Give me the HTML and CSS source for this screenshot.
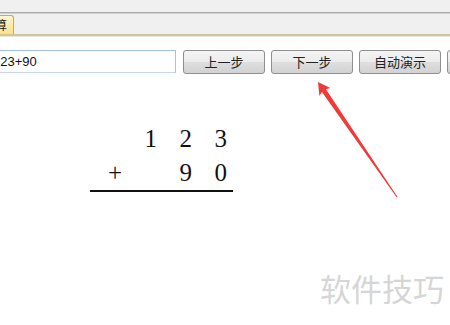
FILE: index.html
```html
<!DOCTYPE html>
<html>
<head>
<meta charset="utf-8">
<link rel="stylesheet" href="styles.css">
</head>
<body>
<div class="page">
  <div class="topbar"></div>
  <div class="sep"></div>
  <div class="tabstrip">
    <div class="tab">计算</div>
  </div>
  <div class="tabline"></div>
  <div class="toolbar">
    <input class="expr" type="text" value="123+90">
    <button class="btn">上一步</button>
    <button class="btn">下一步</button>
    <button class="btn">自动演示</button>
    <button class="btn">重新开始</button>
  </div>
  <div class="sum">
    <div class="row"><span></span><span>1</span><span>2</span><span>3</span></div>
    <div class="row"><span>+</span><span></span><span>9</span><span>0</span></div>
  </div>
  <div class="watermark">软件技巧</div>
  <svg class="arrow" width="450" height="325" viewBox="0 0 450 325">
    <polygon points="318,82 330.4,88 325.9,89.3 397.4,196.8 396.6,197.2 321.9,91.9 319.4,96" fill="#f03a3a"/>
  </svg>
</div>
</body>
</html>
```

FILE: styles.css
```css
html, body {
  margin: 0;
  padding: 0;
  background: #ffffff;
}
.page {
  position: relative;
  width: 450px;
  height: 325px;
  overflow: hidden;
}
.topbar {
  height: 12px;
  background: #f0f0f0;
}
.sep {
  height: 0;
  border-top: 1px solid #a8acae;
  border-bottom: 1px solid #cfd2d3;
}
.tabstrip {
  height: 20px;
  background: #f0f0f0;
  display: flex;
  align-items: flex-end;
}
.tab {
  margin-left: -20px;
  width: 26px;
  height: 18px;
  padding-right: 6px;
  box-sizing: content-box;
  border: 1px solid #b9ab7c;
  border-bottom: none;
  border-radius: 0 3px 0 0;
  background: linear-gradient(#fff6cc, #fbe08a);
  font: 12px/18px "Noto Sans CJK SC", sans-serif;
  color: #1a1a1a;
  text-align: right;
  overflow: hidden;
  white-space: nowrap;
}
.tabline {
  height: 2px;
  background: #d3c49a;
  border-bottom: 1px solid #e4e9e0;
}
.toolbar {
  display: flex;
  align-items: center;
  gap: 6px;
  margin-top: 12px;
  height: 25px;
}
.expr {
  flex: none;
  margin: 0 1px 0 -11px;
  width: 187px;
  height: 23px;
  box-sizing: border-box;
  border: 1px solid #a7c0dc;
  border-bottom-color: #c9d8e8;
  padding: 0 0 0 3px;
  font: 13px "Liberation Sans", sans-serif;
  color: #111;
  background: #fff;
  outline: none;
}
.btn {
  flex: none;
  width: 82px;
  height: 24px;
  box-sizing: border-box;
  border: 1px solid #8f8f8f;
  border-radius: 3px;
  background: linear-gradient(#f4f4f4 0%, #ececec 48%, #dedede 52%, #d2d2d2 100%);
  font: 13px "Noto Sans CJK SC", sans-serif;
  color: #222;
  padding: 0;
  line-height: 20px;
}
.sum {
  margin: 48px 0 0 90px;
  width: 143px;
  box-sizing: border-box;
  border-bottom: 2px solid #111;
  font: 25px/34px "Liberation Serif", serif;
  color: #111;
}
.row {
  display: grid;
  grid-template-columns: 32px 35px 35px 35px;
  padding-right: 6px;
  text-align: right;
}
.watermark {
  position: absolute;
  left: 320px;
  top: 272px;
  font: 31px/31px "Noto Sans CJK SC", sans-serif;
  color: #d6d6d6;
}
.arrow {
  position: absolute;
  left: 0;
  top: 0;
}
```
